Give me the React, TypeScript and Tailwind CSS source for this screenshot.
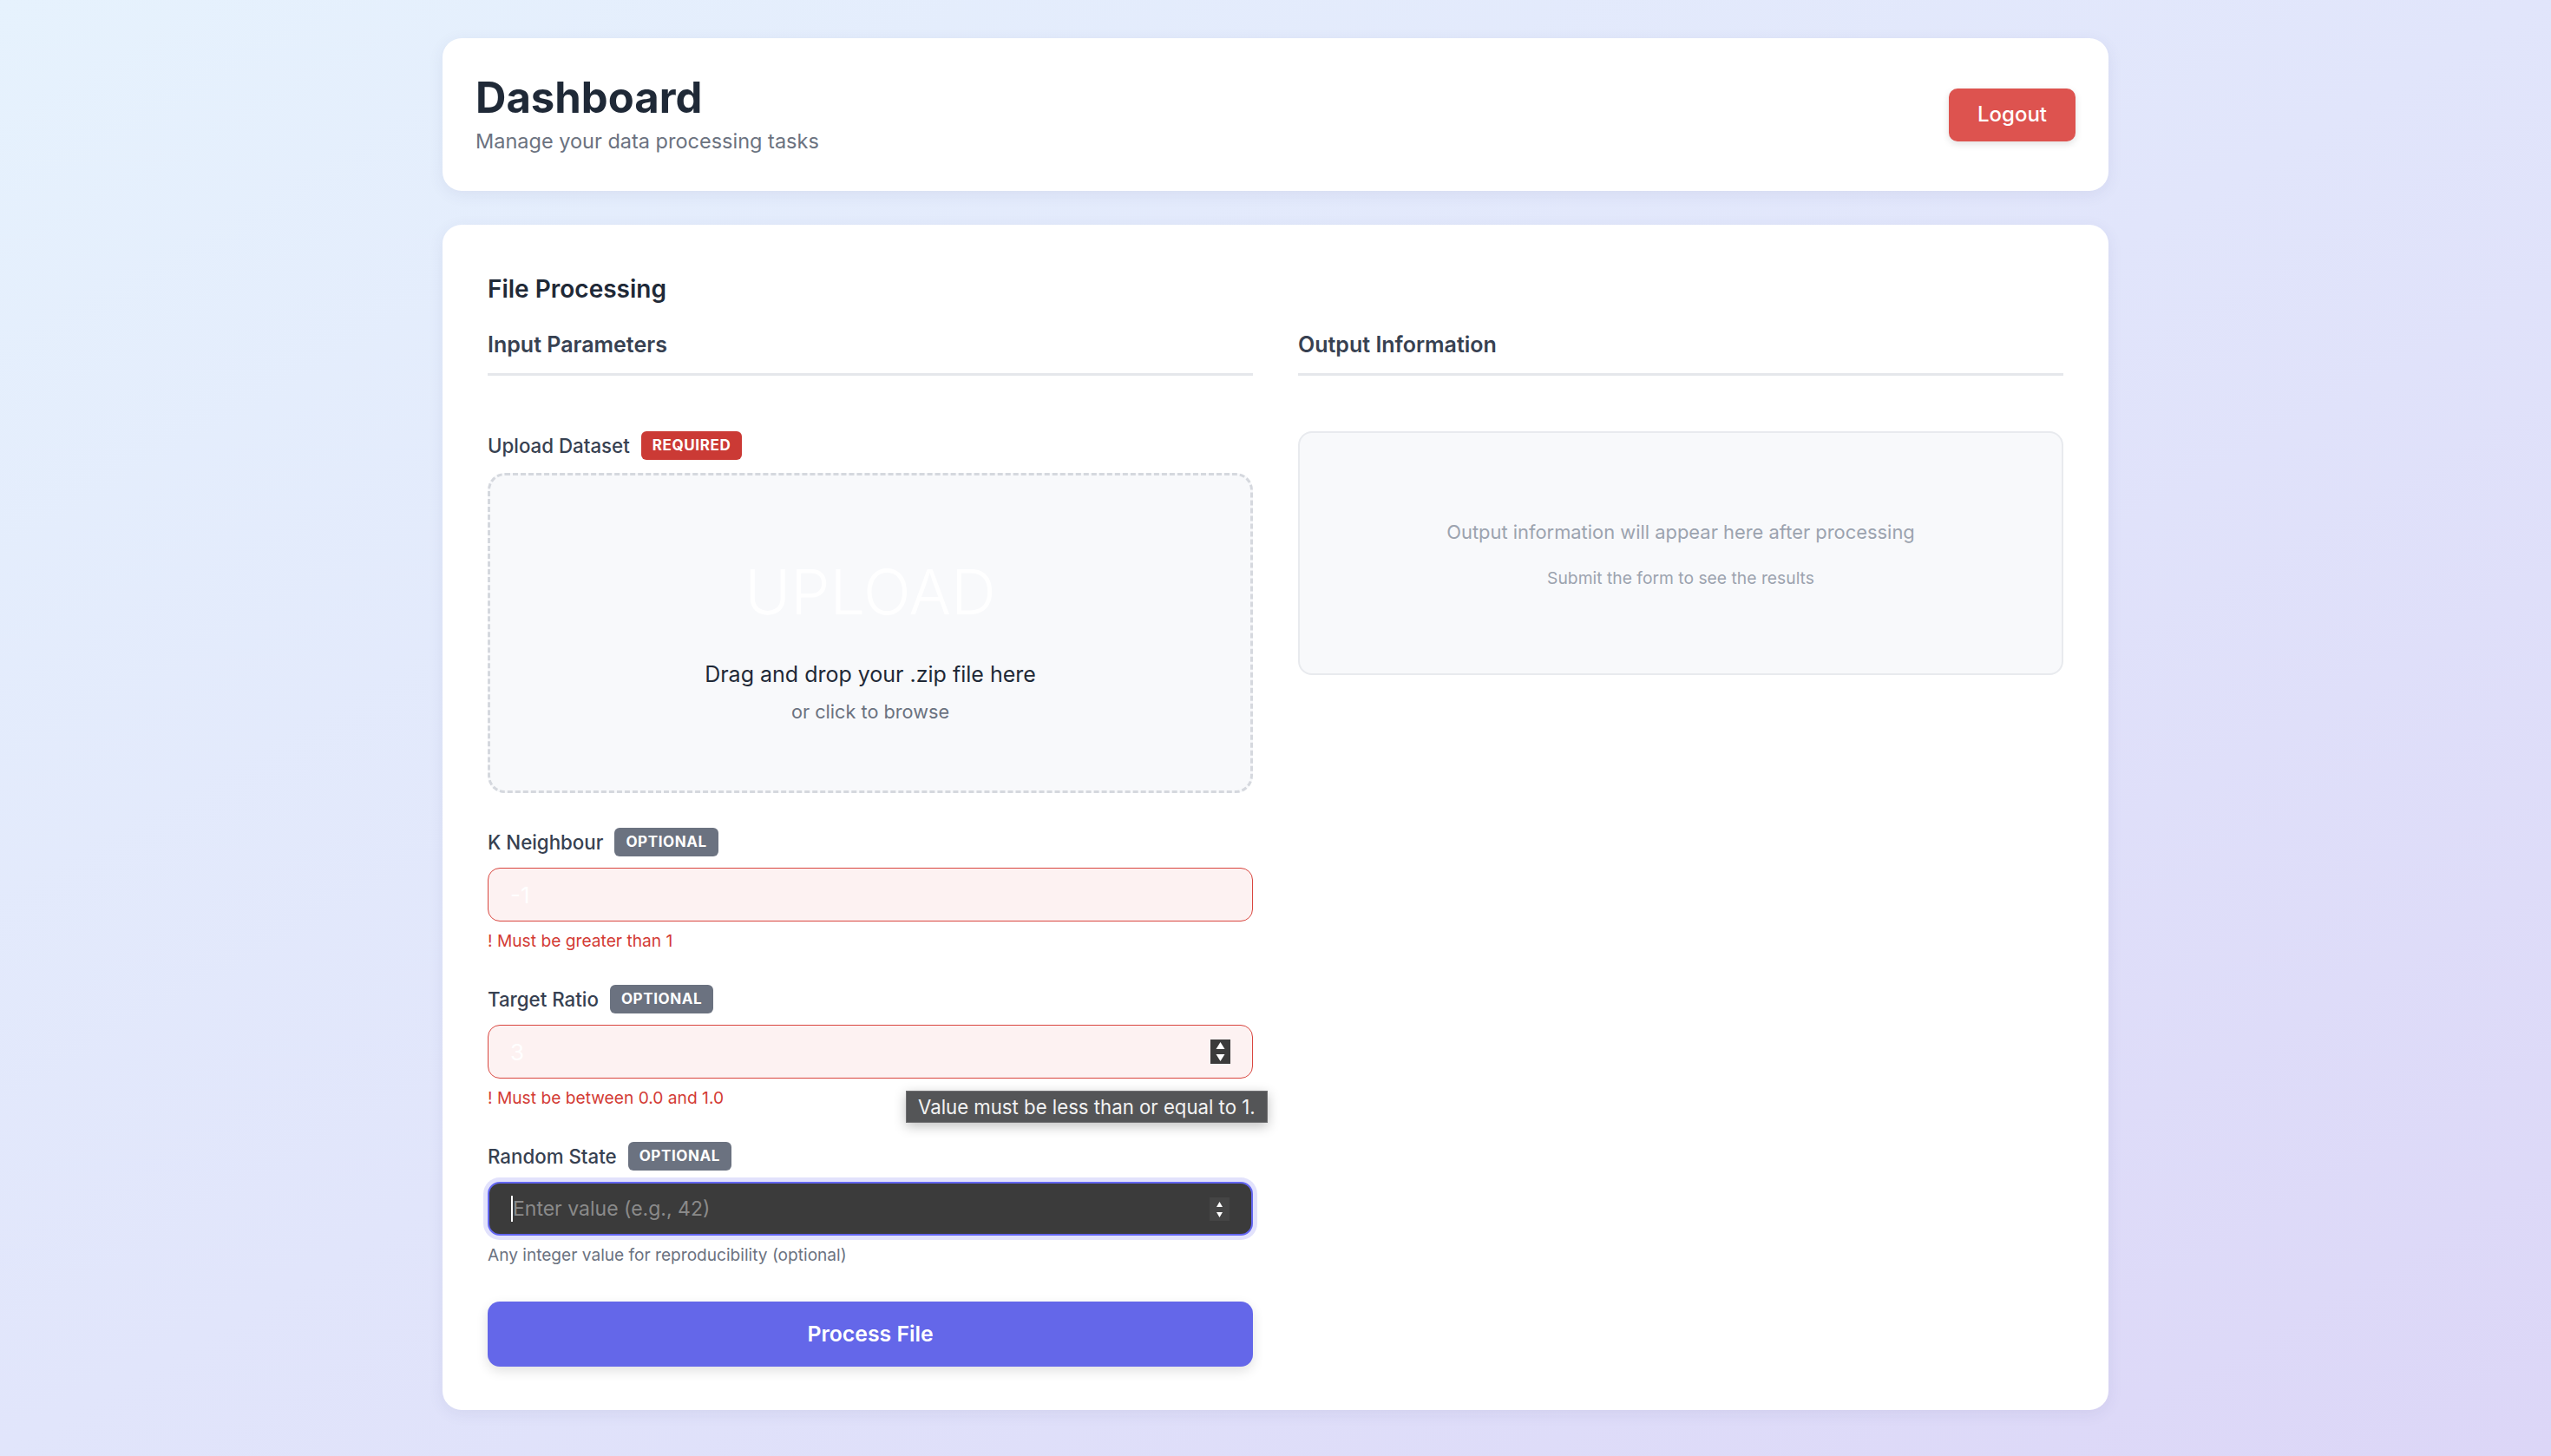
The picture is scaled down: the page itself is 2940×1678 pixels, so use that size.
import React from "react";

function Badge({ kind }: { kind: "required" | "optional" }) {
  return kind === "required" ? (
    <span className="inline-flex h-[33px] items-center rounded-[6px] bg-[#cb3a35] px-[13px] text-[17px] font-bold tracking-[0.6px] text-white">
      REQUIRED
    </span>
  ) : (
    <span className="inline-flex h-[33px] items-center rounded-[6px] bg-[#6b7280] px-[13px] text-[17px] font-bold tracking-[0.6px] text-white">
      OPTIONAL
    </span>
  );
}

function Label({ text, kind }: { text: string; kind: "required" | "optional" }) {
  return (
    <div className="flex h-[33px] items-center gap-[13px]">
      <span className="text-[22.3px] font-medium text-[#374151]">{text}</span>
      <Badge kind={kind} />
    </div>
  );
}

function Spinner({ dark }: { dark?: boolean }) {
  return dark ? (
    <svg width="23" height="27" viewBox="0 0 23 27" className="shrink-0">
      <rect width="23" height="27" fill="#454545" />
      <polygon points="11.5,5 15,11 8,11" fill="#ffffff" />
      <polygon points="8,17 15,17 11.5,23" fill="#ffffff" />
    </svg>
  ) : (
    <svg width="23" height="28" viewBox="0 0 23 28" className="shrink-0">
      <rect width="23" height="28" fill="#3b3b3b" />
      <polygon points="11.5,3 16.5,11 6.5,11" fill="#ffffff" />
      <polygon points="6.5,17 16.5,17 11.5,25" fill="#ffffff" />
    </svg>
  );
}

export default function App() {
  return (
    <div className="min-h-screen w-full bg-linear-to-br from-[#e6f2fd] via-[#e1e5fb] to-[#dcd6f7] font-[Inter,sans-serif]">
      <div className="mx-auto w-[1920px] pt-[44px] pb-[52px]">
        {/* Header */}
        <div className="flex items-center justify-between rounded-[22px] bg-white px-[38px] pt-[39px] pb-[39px] shadow-[0_4px_18px_rgba(60,60,120,0.08)]">
          <div className="flex flex-col">
            <h1 className="text-[49px] font-bold leading-[60px] text-[#1f2937]">Dashboard</h1>
            <p className="mt-[2px] text-[23.5px] leading-[36px] text-[#6b7280]">Manage your data processing tasks</p>
          </div>
          <button className="h-[61px] rounded-[10px] bg-[#dd534f] px-[33px] text-[24px] font-medium text-white shadow-[0_3px_8px_rgba(0,0,0,0.12)]">
            Logout
          </button>
        </div>

        {/* Main card */}
        <div className="mt-[39px] rounded-[22px] bg-white px-[52px] pt-[54px] pb-[50px] shadow-[0_4px_18px_rgba(60,60,120,0.08)]">
          <h2 className="text-[28px] font-semibold leading-[40px] text-[#1f2937]">File Processing</h2>
          <div className="mt-[26px] grid grid-cols-2 gap-[52px]">
            {/* Left column */}
            <div className="flex flex-col">
              <h3 className="border-b-[3px] border-[#e5e7eb] pb-[15px] text-[25px] font-semibold leading-[36px] text-[#374151]">
                Input Parameters
              </h3>

              <div className="mt-[64px] flex flex-col">
                <Label text="Upload Dataset" kind="required" />
                <div className="mt-[15px] flex h-[369px] flex-col items-center rounded-[20px] border-[3px] border-dashed border-[#d5d8de] bg-[#f8f9fb] pt-[94px]">
                  <div className="text-[72px] font-light leading-[80px] text-white">UPLOAD</div>
                  <div className="mt-[36px] text-[25px] leading-[38px] text-[#1f2937]">Drag and drop your .zip file here</div>
                  <div className="mt-[8px] text-[21.7px] leading-[32px] text-[#6b7280]">or click to browse</div>
                </div>
              </div>

              <div className="mt-[40px] flex flex-col">
                <Label text="K Neighbour" kind="optional" />
                <div className="mt-[13px] flex h-[62px] items-center rounded-[14px] border-[1.5px] border-[#d9463f] bg-[#fdf2f2] px-[25px]">
                  <span className="text-[26px] text-white">-1</span>
                </div>
                <div className="mt-[7px] text-[19.2px] leading-[30px] text-[#d33b35]">! Must be greater than 1</div>
              </div>

              <div className="relative mt-[36px] flex flex-col">
                <Label text="Target Ratio" kind="optional" />
                <div className="mt-[13px] flex h-[62px] items-center justify-between rounded-[14px] border-[1.5px] border-[#d9463f] bg-[#fdf2f2] pl-[25px] pr-[25px]">
                  <span className="text-[26px] text-white">3</span>
                  <Spinner />
                </div>
                <div className="mt-[7px] text-[19.2px] leading-[30px] text-[#d33b35]">! Must be between 0.0 and 1.0</div>
                <div className="absolute left-[482px] top-[122px] whitespace-nowrap border border-[#6f6f71] bg-[#545557] px-[13px] text-[22.2px] leading-[35px] text-[#f2f2f2] shadow-[0_4px_14px_rgba(0,0,0,0.25)]">
                  Value must be less than or equal to 1.
                </div>
              </div>

              <div className="mt-[36px] flex flex-col">
                <Label text="Random State" kind="optional" />
                <div className="mt-[13px] flex h-[62px] items-center justify-between rounded-[14px] border-2 border-[#6366f1] bg-[#3b3b3b] pl-[25px] pr-[25px] shadow-[0_0_0_5px_#e2e2fc]">
                  <div className="flex items-center">
                    <span className="h-[30px] w-[2px] bg-white" />
                    <span className="text-[23px] text-[#8a8a8a]">Enter value (e.g., 42)</span>
                  </div>
                  <Spinner dark />
                </div>
                <div className="mt-[7px] text-[19.1px] leading-[30px] text-[#6b7280]">Any integer value for reproducibility (optional)</div>
              </div>

              <button className="mt-[39px] h-[75px] rounded-[14px] bg-[#6467e9] text-[24.8px] font-semibold text-white shadow-[0_5px_14px_rgba(0,0,0,0.12)]">
                Process File
              </button>
            </div>

            {/* Right column */}
            <div className="flex flex-col">
              <h3 className="border-b-[3px] border-[#e5e7eb] pb-[15px] text-[25px] font-semibold leading-[36px] text-[#374151]">
                Output Information
              </h3>
              <div className="mt-[64px] flex h-[281px] flex-col items-center justify-center rounded-[16px] border-2 border-[#e8eaee] bg-[#f8f9fb]">
                <div className="text-[21.9px] leading-[36px] text-[#9ca3af]">Output information will appear here after processing</div>
                <div className="mt-[20px] text-[19.3px] leading-[30px] text-[#9ca3af]">Submit the form to see the results</div>
              </div>
            </div>
          </div>
        </div>
      </div>
    </div>
  );
}
